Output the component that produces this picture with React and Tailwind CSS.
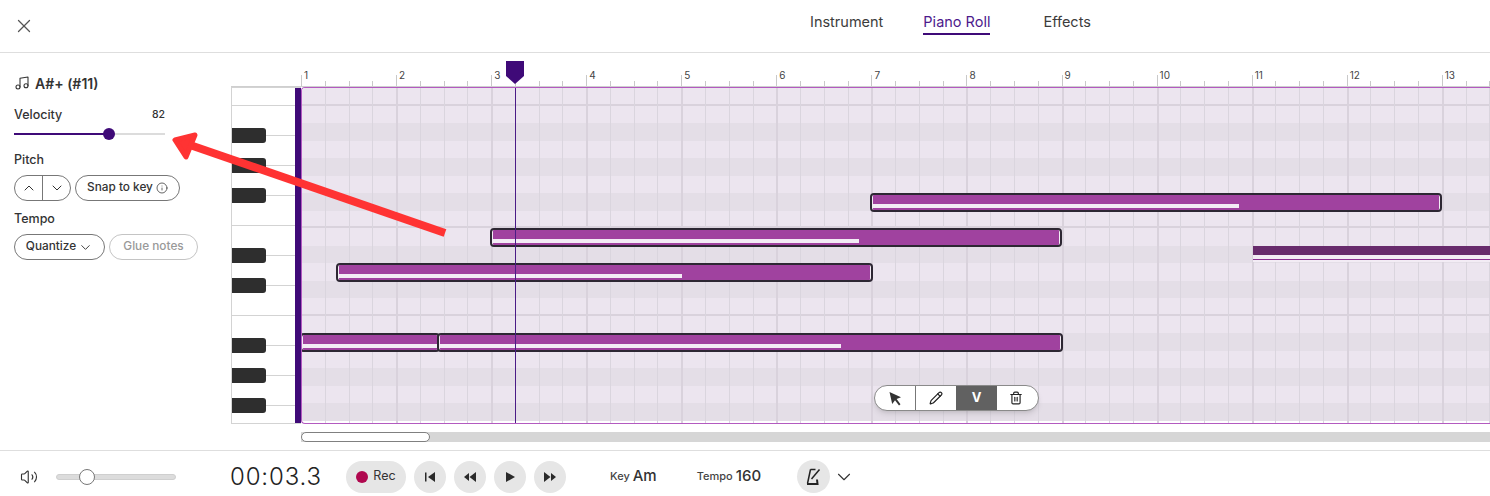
import React from 'react';
import { X, Music, ChevronUp, ChevronDown, Info, Volume2, Pencil, Trash2 } from 'lucide-react';

const LANE = 17.5;
const darkLanes = [2, 4, 6, 9, 11, 14, 16, 18];
const lineLanes = [0, 7, 12];
const keyLines = [105, 135, 165, 195, 225, 255, 285, 315, 345, 375, 405];
const blackKeys = [135, 165, 195, 255, 285, 345, 375, 405];
const whiteLines = [105, 225, 315];
const cells = Array.from({ length: 52 }, (_, i) => i);

// left / right are page pixels, lane is the row on the roll
const notes = [
  { left: 870, right: 1442, lane: 6, vel: 1239 },
  { left: 490, right: 1062, lane: 8, vel: 859 },
  { left: 336, right: 873, lane: 10, vel: 682 },
  { left: 300, right: 440, lane: 14, vel: 440 },
  { left: 437, right: 1063, lane: 14, vel: 841 },
];

const Note = ({ note }) => (
  <div
    className="absolute h-[19px] rounded-[4px] border-2 border-[#2d2733] bg-[#f3ecf5] px-px overflow-hidden"
    style={{ left: note.left - 302, width: note.right - note.left, top: note.lane * LANE - 0.5 }}
  >
    <div className="h-[9px] bg-[#a0429f]" />
    <div className="h-[4px] bg-[#a0429f]">
      <div className="h-full bg-[#f3ecf5]" style={{ width: note.vel - note.left - 3 }} />
    </div>
    <div className="h-[2px] bg-[#a0429f]" />
  </div>
);

const RoundButton = ({ children }) => (
  <button className="w-8 h-8 rounded-full bg-[#e6e6e6] flex items-center justify-center">{children}</button>
);

const Pill = ({ children, className }) => (
  <button className={`h-[26px] rounded-full border flex items-center justify-center text-[11.8px] font-medium ${className}`}>
    {children}
  </button>
);

const Ruler = () => (
  <div className="h-[34px] pl-[70px] flex items-end overflow-hidden bg-white border-b border-[#cfcfcf]">
    {cells.map((i) => (
      <div
        key={i}
        className={`relative shrink-0 w-[23.775px] border-l border-[#c9c9c9] ${i % 4 === 0 ? 'h-[11px]' : 'h-[5px]'}`}
      >
        {i % 4 === 0 && (
          <span className="absolute left-[2px] -top-[6px] text-[10px] leading-3 text-[#444]">{i / 4 + 1}</span>
        )}
      </div>
    ))}
  </div>
);

const Keyboard = () => (
  <div className="relative w-[70px] shrink-0 h-[337px] border-y border-l border-[#d3d3d3] bg-white">
    <div className="h-[17px]" />
    {keyLines.map((y) => (
      <div key={y} className={`relative ${y === 405 ? 'h-[18px]' : 'h-[30px]'}`}>
        <div
          className={`absolute top-0 right-[6px] h-px bg-[#d3d3d3] ${whiteLines.includes(y) ? 'left-0' : 'left-[34px]'}`}
        />
        {blackKeys.includes(y) && (
          <div className="absolute left-0 -top-[7px] w-[34px] h-[15px] rounded-r-[3px] bg-[#2e2e2e]" />
        )}
      </div>
    ))}
    <div className="absolute top-0 bottom-0 right-0 w-[6px] bg-[#3f0a78]" />
  </div>
);

const Grid = () => (
  <div className="relative flex-1 h-[337px] overflow-hidden rounded-tl-[4px] rounded-bl-[4px] border-y border-l border-[#b35ac0]">
    <div className="flex flex-col">
      {Array.from({ length: 19 }, (_, i) => (
        <div
          key={i}
          className={`h-[17.5px] shrink-0 ${darkLanes.includes(i) ? 'bg-[#e4dee7]' : 'bg-[#ece5ef]'} ${lineLanes.includes(i) ? 'border-b-2 border-[#d9d2dc]' : ''}`}
        />
      ))}
    </div>
    <div className="absolute inset-y-0 -left-px flex">
      {cells.map((i) => (
        <div
          key={i}
          className={`shrink-0 w-[23.775px] ${i === 0 ? '' : i % 4 === 0 ? 'border-l-2 border-[#d9d2dc]' : 'border-l border-[#dad5de]'}`}
        />
      ))}
    </div>

    <div className="absolute left-[951px] top-[158px] w-[300px] h-[16px] bg-[#f3ecf5]">
      <div className="h-[9px] bg-[#682b6c]" />
      <div className="h-[4px]" />
      <div className="h-px bg-[#8a2f90]" />
    </div>
    {notes.map((note) => (
      <Note key={note.left} note={note} />
    ))}
    <div className="absolute top-0 bottom-0 left-[213px] w-px bg-[#4b1c86]" />
  </div>
);

const ToolBar = () => (
  <div className="absolute left-[643px] top-[332px] flex h-[26px] w-[165px] overflow-hidden rounded-full border border-[#8a8a8a] bg-white shadow-md">
    <div className="w-[41px] flex items-center justify-center border-r border-[#777]">
      <svg width="14" height="15" viewBox="0 0 14 15">
        <path d="M1.5 1 L13 6.2 L8.6 8 L12.5 13.2 L11 14.4 L7 9.2 L4.2 13 Z" fill="#333" />
      </svg>
    </div>
    <div className="w-[40px] flex items-center justify-center">
      <Pencil size={14} color="#222" strokeWidth={2} />
    </div>
    <div className="w-[41px] flex items-center justify-center bg-[#616161] text-white text-[13px] font-bold">V</div>
    <div className="flex-1 flex items-center justify-center pr-1">
      <Trash2 size={14} color="#222" strokeWidth={2} />
    </div>
  </div>
);

const Sidebar = () => (
  <div className="w-[231px] shrink-0 pl-[14px] text-[#333]">
    <div className="flex items-center gap-[5px] mt-5 h-5 text-[14px] font-semibold">
      <Music size={16} strokeWidth={1.6} />
      <span>A#+ (#11)</span>
    </div>
    <div className="flex w-[151px] justify-between items-center mt-[14px] h-4">
      <span className="text-[12.5px] font-medium">Velocity</span>
      <span className="text-[10.5px] font-medium">82</span>
    </div>
    <div className="relative w-[151px] h-[2px] mt-[10px] bg-[#dcdcdc]">
      <div className="h-full w-[95px] bg-[#3f0a78]" />
      <div className="absolute left-[89px] -top-[5px] w-3 h-3 rounded-full bg-[#3f0a78]" />
    </div>
    <div className="mt-[17px] h-4 text-[12.5px] font-medium leading-4">Pitch</div>
    <div className="flex gap-1 mt-[7px]">
      <div className="flex w-[57px] h-[26px] rounded-full border border-[#777]">
        <div className="flex-1 flex items-center justify-center border-r border-[#777]">
          <ChevronUp size={16} strokeWidth={1.5} />
        </div>
        <div className="flex-1 flex items-center justify-center">
          <ChevronDown size={16} strokeWidth={1.5} />
        </div>
      </div>
      <Pill className="w-[105px] gap-[3px] border-[#777]">
        Snap to key <Info size={12} strokeWidth={1.5} />
      </Pill>
    </div>
    <div className="mt-[10px] h-4 text-[12.5px] font-medium leading-4">Tempo</div>
    <div className="flex gap-1 mt-[7px]">
      <Pill className="w-[91px] gap-[2px] border-[#777]">
        Quantize <ChevronDown size={15} strokeWidth={1.5} />
      </Pill>
      <Pill className="w-[89px] border-[#c4c4c4] text-[#999]">Glue notes</Pill>
    </div>
  </div>
);

const Footer = () => (
  <div className="h-[46px] pt-[6px] flex items-center border-t border-[#dedede] text-[#333]">
    <Volume2 size={18} strokeWidth={1.5} className="ml-5" />
    <div className="relative ml-[18px] w-[120px] h-[6px] rounded-full bg-[#dcdcdc] border border-[#cfcfcf]">
      <div className="absolute left-[22px] -top-[6px] w-4 h-4 rounded-full bg-white border border-[#777]" />
    </div>
    <span className="ml-[54px] w-[116px] text-[24px] font-light tracking-[0.85px] text-[#222]">00:03.3</span>
    <button className="w-[60px] h-8 rounded-full bg-[#e6e6e6] flex items-center justify-center gap-[5px] text-[12.5px]">
      <span className="w-3 h-3 rounded-full bg-[#b0084f]" />
      Rec
    </button>
    <div className="flex gap-2 ml-2">
      <RoundButton>
        <svg width="12" height="12" viewBox="0 0 12 12" fill="#2a2a2a">
          <rect x="1" y="1.5" width="1.5" height="9" />
          <path d="M11 1 V11 L4 6 Z" />
        </svg>
      </RoundButton>
      <RoundButton>
        <svg width="14" height="12" viewBox="0 0 14 12" fill="#2a2a2a">
          <path d="M6 2 V10 L1 6 Z" />
          <path d="M13 1 V11 L6.5 6 Z" />
        </svg>
      </RoundButton>
      <RoundButton>
        <svg width="12" height="12" viewBox="0 0 12 12" fill="#2a2a2a">
          <path d="M2 1 V11 L11 6 Z" />
        </svg>
      </RoundButton>
      <RoundButton>
        <svg width="14" height="12" viewBox="0 0 14 12" fill="#2a2a2a">
          <path d="M1 1 V11 L7.5 6 Z" />
          <path d="M8 2 V10 L13 6 Z" />
        </svg>
      </RoundButton>
    </div>
    <span className="ml-[44px] text-[11px] font-medium text-[#444]">Key</span>
    <span className="ml-[3px] w-[24px] text-[15px] font-medium whitespace-nowrap">Am</span>
    <span className="ml-[40px] w-[36px] text-[11px] font-medium text-[#444]">Tempo</span>
    <span className="ml-[3px] w-[25px] text-[15px] font-medium">160</span>
    <button className="ml-[36px] w-[33px] h-[33px] rounded-full bg-[#e6e6e6] flex items-center justify-center">
      <svg width="15" height="18" viewBox="0 0 15 18" fill="none" stroke="#222" strokeWidth="1.5">
        <path d="M4.5 1.5 H9.5 M4.5 1.5 L1.5 15.5" />
        <path d="M5.5 11 L13.5 1.5" />
        <path d="M1 16 H11.5 L11 11.5" strokeWidth="2" />
      </svg>
    </button>
    <ChevronDown size={22} strokeWidth={1.2} className="ml-[3px]" />
  </div>
);

const App = () => (
  <div className="relative w-[1490px] h-[496px] overflow-hidden bg-white flex flex-col font-['Inter',sans-serif]">
    <div className="relative h-[53px] shrink-0 border-b border-[#dedede] flex items-center">
      <X size={22} strokeWidth={1.4} color="#555" className="ml-[13px]" />
      <div className="absolute left-[810px] top-[11px] flex gap-10 text-[14.5px] text-[#3c3c3c]">
        <span className="h-[24px]">Instrument</span>
        <span className="h-[24px] text-[#4d1a8c] border-b-2 border-[#3f0a78]">Piano Roll</span>
        <span className="ml-[13px] h-[24px]">Effects</span>
      </div>
    </div>

    <div className="flex h-[397px] shrink-0">
      <Sidebar />
      <div className="relative flex-1 min-w-0">
        <Ruler />
        <div className="flex">
          <Keyboard />
          <Grid />
        </div>
        <div className="ml-[70px] mt-[8px] h-[10px] bg-[#d6d6d6]">
          <div className="w-[129px] h-full rounded-full bg-white border border-[#808080]" />
        </div>
        <ToolBar />
        {/* playhead marker */}
        <svg className="absolute left-[275px] top-[8px]" width="18" height="23" viewBox="0 0 18 23">
          <path d="M0 0 H18 V15 L9 23 L0 15 Z" fill="#3f0a78" />
        </svg>
      </div>
    </div>

    <Footer />

    {/* annotation arrow */}
    <svg className="absolute left-0 top-0 pointer-events-none" width="1490" height="496">
      <path d="M445 233 L190 145" stroke="#ff3333" strokeWidth="8" fill="none" />
      <path d="M175 140 L195 135 L186 157 Z" fill="#ff3333" stroke="#ff3333" strokeWidth="5" strokeLinejoin="round" />
    </svg>
  </div>
);

export default App;
